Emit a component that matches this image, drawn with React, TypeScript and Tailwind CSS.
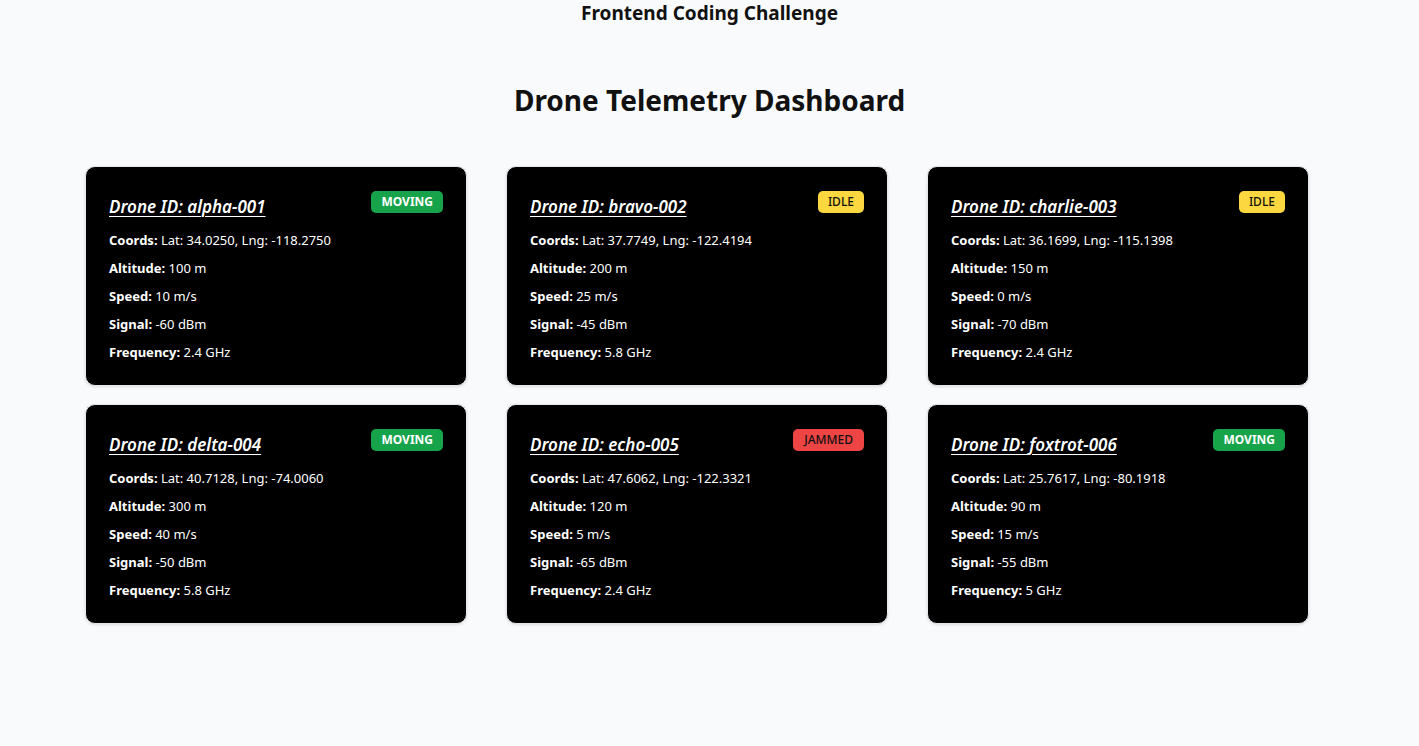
import React from "react";

type Status = "MOVING" | "IDLE" | "JAMMED";
interface Drone {
  id: string;
  lat: string;
  lng: string;
  alt: number;
  speed: number;
  signal: number;
  freq: string;
  status: Status;
}

const drones: Drone[] = [
  { id: "alpha-001", lat: "34.0250", lng: "-118.2750", alt: 100, speed: 10, signal: -60, freq: "2.4", status: "MOVING" },
  { id: "bravo-002", lat: "37.7749", lng: "-122.4194", alt: 200, speed: 25, signal: -45, freq: "5.8", status: "IDLE" },
  { id: "charlie-003", lat: "36.1699", lng: "-115.1398", alt: 150, speed: 0, signal: -70, freq: "2.4", status: "IDLE" },
  { id: "delta-004", lat: "40.7128", lng: "-74.0060", alt: 300, speed: 40, signal: -50, freq: "5.8", status: "MOVING" },
  { id: "echo-005", lat: "47.6062", lng: "-122.3321", alt: 120, speed: 5, signal: -65, freq: "2.4", status: "JAMMED" },
  { id: "foxtrot-006", lat: "25.7617", lng: "-80.1918", alt: 90, speed: 15, signal: -55, freq: "5", status: "MOVING" },
];

function Badge({ status }: { status: Status }) {
  if (status === "MOVING")
    return (
      <span className="mt-[1px] block rounded-[5px] bg-[#16a34a] px-[10px] py-[3px] text-[12px] font-bold leading-[16px] text-white">
        MOVING
      </span>
    );
  if (status === "IDLE")
    return (
      <span className="mt-[1px] block rounded-[5px] bg-[#fcd73f] px-[10px] py-[3px] text-[12px] font-medium leading-[16px] text-[#111]">
        IDLE
      </span>
    );
  return (
    <span className="mt-[1px] block rounded-[5px] bg-[#ef4444] px-[11px] py-[3px] text-[12px] font-medium leading-[16px] text-[#111]">
      JAMMED
    </span>
  );
}

function Row({ label, value }: { label: string; value: string }) {
  return (
    <p className="text-[13px] leading-[28px] text-white">
      <span className="font-bold">{label}:</span> {value}
    </p>
  );
}

function Card({ d }: { d: Drone }) {
  return (
    <div className="h-[220px] rounded-[10px] border border-[#e5e7eb] bg-black px-[23px] pt-[23px] shadow-[0_1px_3px_rgba(0,0,0,0.12)]">
      <div className="flex items-start justify-between">
        <h3 className="mt-[4px] text-[17px] font-semibold italic leading-[26px] text-white underline decoration-1 underline-offset-[3px]">
          Drone ID: {d.id}
        </h3>
        <Badge status={d.status} />
      </div>
      <div className="mt-[6px]">
        <Row label="Coords" value={`Lat: ${d.lat}, Lng: ${d.lng}`} />
        <Row label="Altitude" value={`${d.alt} m`} />
        <Row label="Speed" value={`${d.speed} m/s`} />
        <Row label="Signal" value={`${d.signal} dBm`} />
        <Row label="Frequency" value={`${d.freq} GHz`} />
      </div>
    </div>
  );
}

export default function App() {
  return (
    <div
      className="min-h-[746px] bg-[#f9fafb] text-[#111]"
      style={{ fontFamily: '"Noto Sans", "Open Sans", sans-serif' }}
    >
      <h2 className="pt-[1px] text-center text-[19px] font-bold leading-[24px]">Frontend Coding Challenge</h2>
      <h1 className="mt-[56px] text-center text-[28px] font-bold leading-[38px]">Drone Telemetry Dashboard</h1>
      <div className="mt-[47px] grid grid-cols-[382px_382px_382px] gap-x-[39px] gap-y-[18px] pl-[85px]">
        {drones.map((d) => (
          <Card key={d.id} d={d} />
        ))}
      </div>
    </div>
  );
}
